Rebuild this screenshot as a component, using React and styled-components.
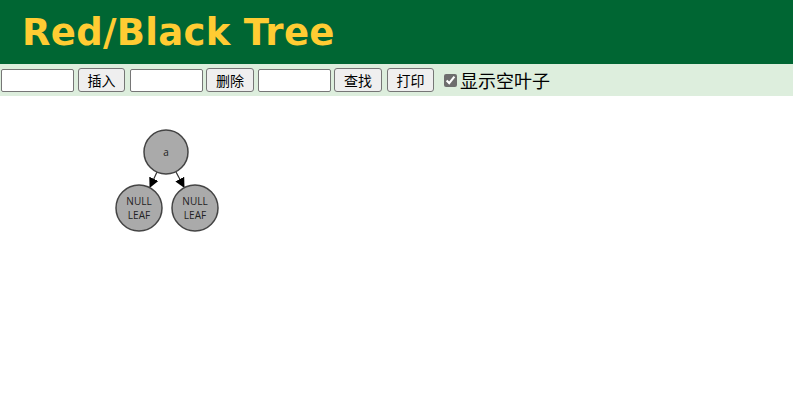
import React from "react";
import styled, { createGlobalStyle } from "styled-components";

const Global = createGlobalStyle`
  html, body { margin: 0; padding: 0; background: #fff; }
  body { font-family: "Liberation Sans", Arial, sans-serif; }
`;

const Header = styled.header`
  height: 64px;
  background: #006633;
  display: flex;
  align-items: center;
  padding-left: 22px;
`;

const Title = styled.h1`
  margin: 0;
  font-family: "DejaVu Sans", Verdana, sans-serif;
  font-weight: bold;
  font-size: 37px;
  color: #ffcc33;
  letter-spacing: 0.3px;
`;

const Toolbar = styled.div`
  height: 32px;
  background: #ddeedd;
  display: flex;
  align-items: center;
  padding-left: 1px;
`;

const Input = styled.input`
  box-sizing: border-box;
  width: 73px;
  height: 23px;
  border: 1px solid #767676;
  border-radius: 2px;
  background: #fff;
  margin: 0 ${(p) => p.$mr || 4}px 0 0;
  padding: 1px 2px;
`;

const Button = styled.button`
  box-sizing: border-box;
  height: 24px;
  width: ${(p) => p.$w || 47}px;
  border: 1px solid #767676;
  border-radius: 3px;
  background: #efefef;
  font-family: "Noto Sans CJK SC", "Liberation Sans", sans-serif;
  font-size: 14px;
  color: #000;
  padding: 0;
  margin: 0 ${(p) => p.$mr || 4}px 0 0;
  line-height: 1;
`;

const CheckLabel = styled.label`
  display: flex;
  align-items: center;
  margin-left: 2px;
  font-family: "Noto Sans CJK SC", sans-serif;
  font-size: 18px;
  color: #000;
`;

const Check = styled.input`
  width: 13px;
  height: 13px;
  margin: 0 3px 0 4px;
  accent-color: #6e6e6e;
`;

const Canvas = styled.svg`
  display: block;
`;

const Node = ({ cx, cy, r, lines, size }) => (
  <g>
    <circle cx={cx} cy={cy} r={r} fill="#aaaaaa" stroke="#444" strokeWidth="1.5" />
    {lines.map((t, i) => (
      <text
        key={i}
        x={cx}
        y={cy + (i - (lines.length - 1) / 2) * 14 + 3.5}
        textAnchor="middle"
        fontFamily="'Open Sans', 'Noto Sans', sans-serif"
        fontSize={size}
        fill="#222"
      >
        {t}
      </text>
    ))}
  </g>
);

export default function App() {
  return (
    <>
      <Global />
      <Header>
        <Title>Red/Black Tree</Title>
      </Header>
      <Toolbar>
        <Input $mr={4} />
        <Button $mr={5}>插入</Button>
        <Input $mr={3} />
        <Button $w={48} $mr={4}>删除</Button>
        <Input $mr={3} />
        <Button $w={48} $mr={5}>查找</Button>
        <Button $mr={4}>打印</Button>
        <CheckLabel>
          <Check type="checkbox" defaultChecked />
          显示空叶子
        </CheckLabel>
      </Toolbar>
      <Canvas width="793" height="322" viewBox="0 96 793 322">
        <defs>
          <marker id="arr" markerWidth="10" markerHeight="10" refX="9" refY="5" orient="auto" markerUnits="userSpaceOnUse">
            <path d="M0,0 L10,5 L0,10 Z" fill="#000" />
          </marker>
        </defs>
        <line x1="157" y1="172" x2="150" y2="187" stroke="#333" strokeWidth="1.2" markerEnd="url(#arr)" />
        <line x1="176" y1="172" x2="184" y2="187" stroke="#333" strokeWidth="1.2" markerEnd="url(#arr)" />
        <Node cx={166} cy={152} r={22} lines={["a"]} size={10} />
        <Node cx={139} cy={208} r={23} lines={["NULL", "LEAF"]} size={10} />
        <Node cx={195} cy={208} r={23} lines={["NULL", "LEAF"]} size={10} />
      </Canvas>
    </>
  );
}
